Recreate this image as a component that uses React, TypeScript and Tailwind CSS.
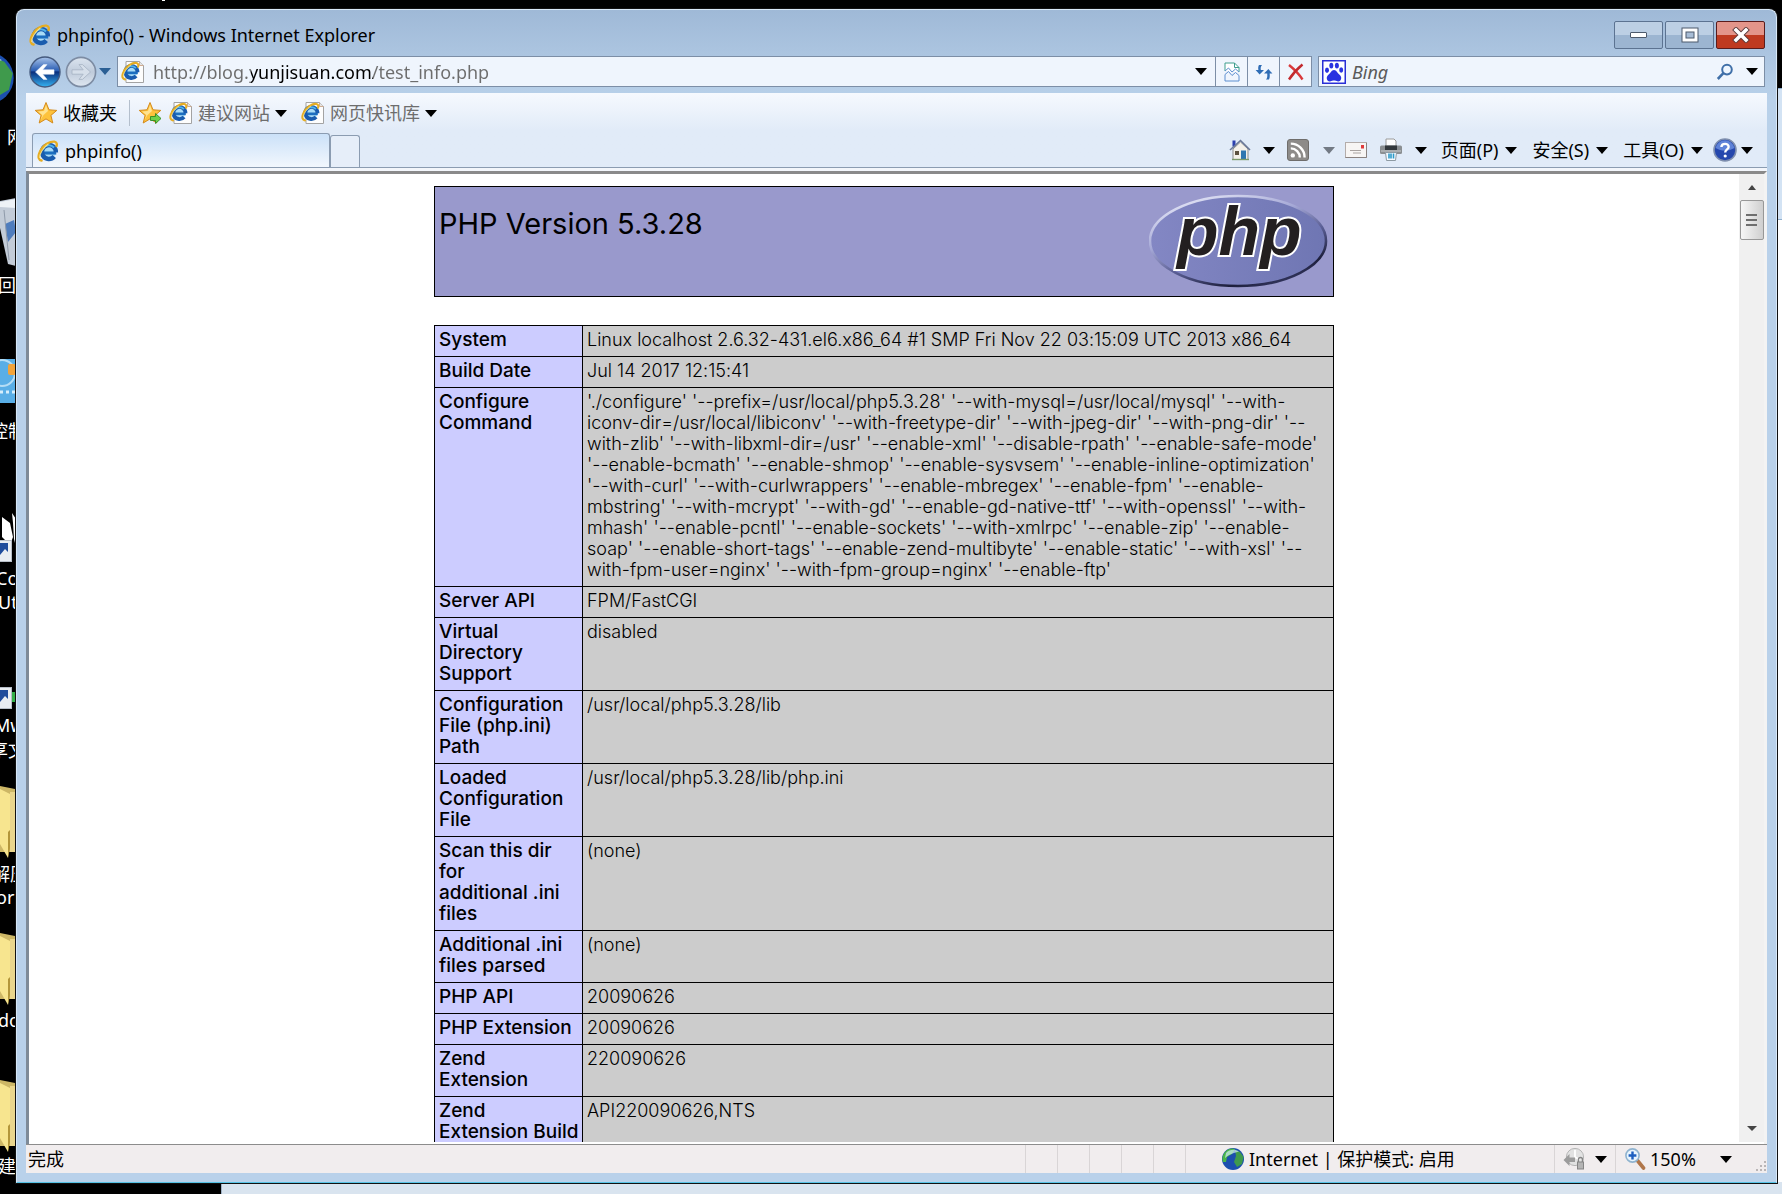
import type { ReactNode } from "react";

interface InfoRow {
  label: string;
  value: string;
}

const infoRows: InfoRow[] = [
  {
    label: "System",
    value: "Linux localhost 2.6.32-431.el6.x86_64 #1 SMP Fri Nov 22 03:15:09 UTC 2013 x86_64",
  },
  { label: "Build Date", value: "Jul 14 2017 12:15:41" },
  {
    label: "Configure\nCommand",
    value: [
      "'./configure' '--prefix=/usr/local/php5.3.28' '--with-mysql=/usr/local/mysql' '--with-",
      "iconv-dir=/usr/local/libiconv' '--with-freetype-dir' '--with-jpeg-dir' '--with-png-dir' '--",
      "with-zlib' '--with-libxml-dir=/usr' '--enable-xml' '--disable-rpath' '--enable-safe-mode'",
      "'--enable-bcmath' '--enable-shmop' '--enable-sysvsem' '--enable-inline-optimization'",
      "'--with-curl' '--with-curlwrappers' '--enable-mbregex' '--enable-fpm' '--enable-",
      "mbstring' '--with-mcrypt' '--with-gd' '--enable-gd-native-ttf' '--with-openssl' '--with-",
      "mhash' '--enable-pcntl' '--enable-sockets' '--with-xmlrpc' '--enable-zip' '--enable-",
      "soap' '--enable-short-tags' '--enable-zend-multibyte' '--enable-static' '--with-xsl' '--",
      "with-fpm-user=nginx' '--with-fpm-group=nginx' '--enable-ftp'",
    ].join("\n"),
  },
  { label: "Server API", value: "FPM/FastCGI" },
  { label: "Virtual\nDirectory\nSupport", value: "disabled" },
  { label: "Configuration\nFile (php.ini)\nPath", value: "/usr/local/php5.3.28/lib" },
  { label: "Loaded\nConfiguration\nFile", value: "/usr/local/php5.3.28/lib/php.ini" },
  { label: "Scan this dir\nfor\nadditional .ini\nfiles", value: "(none)" },
  { label: "Additional .ini\nfiles parsed", value: "(none)" },
  { label: "PHP API", value: "20090626" },
  { label: "PHP Extension", value: "20090626" },
  { label: "Zend\nExtension", value: "220090626" },
  { label: "Zend\nExtension Build", value: "API220090626,NTS" },
];

/* ---------- icons ---------- */

function IeMark() {
  return (
    <g fill="none">
      <circle cx="13" cy="13" r="7.6" fill="#a9dcf6" />
      <path d="M21 14.2H7" stroke="#1c6fc0" strokeWidth="3.4" />
      <path d="M20.6 13.4A7.6 7.6 0 1 0 18.8 18" stroke="#1a5cae" strokeWidth="4.8" />
      <path d="M18.6 8.2A7.6 7.6 0 0 0 6.4 9.6" stroke="#4fb2ea" strokeWidth="2.2" />
      <path
        d="M5 22.4C-1.6 21.4 2.6 9.6 10.8 4.2C17 0.4 22.8 0.8 21.4 6.6"
        stroke="#e6ad22"
        strokeWidth="2.6"
        strokeLinecap="round"
      />
      <path d="M3 19.6C2.4 15 7 8 12.4 4.4" stroke="#fbe48a" strokeWidth="1.1" />
    </g>
  );
}

function IeIcon() {
  return (
    <svg viewBox="0 0 24 24" className="size-[22px] shrink-0">
      <IeMark />
    </svg>
  );
}

function IePageIcon() {
  return (
    <svg viewBox="0 0 24 24" className="size-6 shrink-0">
      <path d="M5 1.5H18.5L22.5 5.5V22.5H5Z" fill="#fdfdfd" stroke="#a3a3a3" />
      <path d="M18.5 1.5V5.5H22.5" fill="#e4e4e4" stroke="#c79a7a" strokeWidth="0.8" />
      <g transform="translate(0 1.5) scale(0.8)">
        <IeMark />
      </g>
    </svg>
  );
}

function StarIcon({ withArrow = false }: { withArrow?: boolean }) {
  return (
    <svg viewBox="0 0 24 24" className="size-6 shrink-0">
      <path
        d="M12 1.5L15 8.8L22.8 9.4L16.9 14.4L18.8 22L12 17.9L5.2 22L7.1 14.4L1.2 9.4L9 8.8Z"
        fill="#fdc23c"
        stroke="#d48a1c"
        strokeLinejoin="round"
      />
      <path d="M12 4L14 10L9.5 14L6.5 19L8.4 14L4 10.4L10 10Z" fill="#ffe391" />
      {withArrow && (
        <path
          d="M12.5 15.5H17.5V12.5L23 17.5L17.5 22.5V19.5H12.5Z"
          fill="#6ed04a"
          stroke="#2f8a22"
          strokeWidth="0.9"
        />
      )}
    </svg>
  );
}

function BackIcon() {
  return (
    <svg viewBox="0 0 32 32" className="size-8">
      <defs>
        <linearGradient id="back" x1="0" y1="0" x2="0" y2="1">
          <stop offset="0" stopColor="#a9c4ea" />
          <stop offset="0.45" stopColor="#2c5fb4" />
          <stop offset="0.5" stopColor="#0a2e7c" />
          <stop offset="1" stopColor="#35b4f4" />
        </linearGradient>
      </defs>
      <circle cx="16" cy="16" r="15" fill="url(#back)" stroke="#44597d" strokeWidth="1.4" />
      <path
        d="M6.5 16L14.5 8.6H18L13.8 13.8H25V18.2H13.8L18 23.4H14.5Z"
        fill="#fff"
        stroke="#e6effb"
        strokeWidth="0.6"
      />
    </svg>
  );
}

function ForwardIcon() {
  return (
    <svg viewBox="0 0 32 32" className="size-8">
      <defs>
        <linearGradient id="fwd" x1="0" y1="0" x2="0" y2="1">
          <stop offset="0" stopColor="#dbe4ef" />
          <stop offset="0.5" stopColor="#bfcbdb" />
          <stop offset="1" stopColor="#dfe7f1" />
        </linearGradient>
      </defs>
      <circle cx="16" cy="16" r="14.6" fill="url(#fwd)" stroke="#7d8ca3" strokeWidth="1.6" />
      <path
        d="M25.5 16L17.5 8.6H14L18.2 13.8H7V18.2H18.2L14 23.4H17.5Z"
        fill="#d6dfea"
        stroke="#a5b1c2"
        strokeWidth="0.8"
      />
    </svg>
  );
}

function Caret({ className = "text-black" }: { className?: string }) {
  return (
    <svg viewBox="0 0 12 7" className={`h-[7px] w-3 shrink-0 ${className}`}>
      <path d="M0 0H12L6 7Z" fill="currentColor" />
    </svg>
  );
}

function BrokenPageIcon() {
  return (
    <svg viewBox="0 0 16 20" className="h-5 w-4" fill="none">
      <path d="M1 9V1H10.5L15 5.5V10" stroke="#3f9e8d" fill="#fff" />
      <path d="M10.5 1V5.5H15" stroke="#3f9e8d" />
      <path d="M1 9L4.5 6L8 10L11.5 7L15 10M1 12.5L4.5 9.5L8 13.5L11.5 10.5L15 13.5" stroke="#5d8fd0" />
      <path d="M1 12.5V19H15V13.5" stroke="#5d8fd0" />
    </svg>
  );
}

function RefreshIcon() {
  return (
    <svg viewBox="0 0 18 18" className="size-[18px]" fill="#2f6db5">
      <path d="M4 2H7C5.6 3.6 5.6 5 5.8 7H9L4.6 11.5L0.6 7H3.4C3 5 3.2 3.4 4 2Z" />
      <path d="M14 16.5H11C12.4 15 12.4 13 12.2 10.6H9L13.4 6L17.4 10.6H14.6C15 13 14.8 15 14 16.5Z" />
    </svg>
  );
}

function StopIcon() {
  return (
    <svg viewBox="0 0 18 18" className="size-[18px]" fill="none">
      <path d="M2 2C7 6 12 11 15.5 16.5" stroke="#d9393b" strokeWidth="2.4" />
      <path d="M15.5 1.5C10 6 5.5 11 2 16.5" stroke="#c22a2e" strokeWidth="2.4" />
    </svg>
  );
}

function BaiduIcon() {
  return (
    <svg viewBox="0 0 24 24" className="size-6 shrink-0">
      <rect x="0.75" y="0.75" width="22.5" height="22.5" fill="#fff" stroke="#2a2fd6" strokeWidth="1.5" />
      <g fill="#2932e1">
        <ellipse cx="9.3" cy="5.6" rx="2" ry="2.9" />
        <ellipse cx="14.9" cy="5.6" rx="2" ry="2.9" />
        <ellipse cx="5" cy="10.2" rx="2" ry="2.7" />
        <ellipse cx="19.2" cy="10" rx="2" ry="2.7" />
        <path d="M12 10C14.6 10 15.2 13 17.6 14.8C20.4 17 19.4 21.6 16 21.4C14 21.2 13.4 20.6 12 20.6C10.6 20.6 10 21.2 8 21.4C4.6 21.6 3.6 17 6.4 14.8C8.8 13 9.4 10 12 10Z" />
      </g>
    </svg>
  );
}

function SearchIcon() {
  return (
    <svg viewBox="0 0 18 18" className="size-[18px]" fill="none" stroke="#3f6fa8">
      <circle cx="11" cy="6.6" r="4.8" strokeWidth="2" fill="#eef6ff" />
      <path d="M7.4 10.2L1.8 16" strokeWidth="2.6" />
    </svg>
  );
}

function HomeIcon() {
  return (
    <svg viewBox="0 0 22 22" className="size-[22px]">
      <rect x="3.5" y="1.5" width="3" height="6" fill="#2a3fae" />
      <path d="M4 10L11.5 3L19 10V20.5H4Z" fill="#f4f1ea" stroke="#8d8d8d" />
      <path d="M1 11L11.5 1.5L21 11" fill="none" stroke="#6a7898" strokeWidth="1.6" />
      <rect x="6" y="12" width="4" height="4" fill="#5d513f" />
      <rect x="12" y="11.5" width="5" height="9" fill="#2f76b0" />
      <path d="M3 20.5H20" stroke="#7d9a6a" strokeWidth="1.4" />
    </svg>
  );
}

function RssIcon() {
  return (
    <svg viewBox="0 0 22 22" className="size-[22px]">
      <rect x="0.5" y="0.5" width="21" height="21" rx="2.5" fill="#8d8b89" stroke="#6f6d6b" />
      <circle cx="5.8" cy="16.4" r="2.2" fill="#fff" />
      <path d="M3.8 9.4A9 9 0 0 1 12.8 18.4M3.8 4.6A13.8 13.8 0 0 1 17.6 18.4" fill="none" stroke="#fff" strokeWidth="2.4" />
    </svg>
  );
}

function MailIcon() {
  return (
    <svg viewBox="0 0 22 16" className="h-4 w-[22px]">
      <rect x="0.5" y="0.5" width="21" height="15" fill="#f7f5f4" stroke="#b3acaa" />
      <path d="M0.5 15.5H21.5V1" fill="none" stroke="#8a8280" />
      <rect x="16" y="3" width="3" height="3.5" fill="#e03b3b" />
      <path d="M5 8.5H16M8 11H16" stroke="#a9a3a1" />
    </svg>
  );
}

function PrinterIcon() {
  return (
    <svg viewBox="0 0 24 24" className="size-6">
      <path d="M7 1H15L17 3V9H7Z" fill="#fff" stroke="#9a9a9a" />
      <rect x="1" y="7.5" width="22" height="8.5" rx="1.5" fill="#8b8f92" />
      <rect x="6" y="7.5" width="12" height="4.5" fill="#33383c" />
      <path d="M2 13H22" stroke="#c9ccce" />
      <path d="M6.5 14.5H17.5L16.5 22.5H7.5Z" fill="#f5fbff" stroke="#8d9aa3" />
      <path d="M10 15.5V20.5M12 15.5V20.5M14.5 15.5V20.5" stroke="#2c9ac8" strokeWidth="1.6" />
    </svg>
  );
}

function HelpIcon() {
  return (
    <svg viewBox="0 0 24 24" className="size-6">
      <circle cx="12" cy="12" r="11" fill="#2547ad" stroke="#7f8fae" strokeWidth="1.6" />
      <path d="M2.6 10A9.6 9.6 0 0 1 21.4 10C16 13.4 8 13.4 2.6 10Z" fill="#5f83d8" />
      <path d="M8.4 9C8.6 4.8 15.8 4.8 15.6 9C15.5 11.4 12.2 11.4 12.2 14.4" fill="none" stroke="#fff" strokeWidth="2.4" />
      <circle cx="12.2" cy="18" r="1.6" fill="#fff" />
    </svg>
  );
}

function GlobeIcon({ className = "size-6" }: { className?: string }) {
  return (
    <svg viewBox="0 0 24 24" className={`shrink-0 ${className}`}>
      <circle cx="12" cy="12" r="11" fill="#1c4fae" />
      <path d="M4 5C7 1 12 1 14 2L11 7L6 10L5 15L2 15C0.6 11 1.6 8 4 5Z" fill="#49b648" />
      <path d="M14 3L19 5L22.6 10L21 17L16 20L13 15L15 9Z" fill="#3f9a4c" />
      <path d="M5 6C8 2.4 14 1.6 18 4.4C14 5.6 8 7 4 11Z" fill="#d3ecf8" opacity="0.7" />
    </svg>
  );
}

function PrivacyIcon() {
  return (
    <svg viewBox="0 0 24 24" className="size-6">
      <circle cx="12" cy="10" r="8.6" fill="#e2e2e2" stroke="#b5b5b5" />
      <path d="M12 3V10L17 13" fill="none" stroke="#fff" strokeWidth="1.8" />
      <path d="M0.5 13L6.5 7V10.5H12V15H6.5V19Z" fill="#9c9c9c" />
      <rect x="14.5" y="15" width="6" height="7" fill="#b4b4b4" stroke="#858585" />
      <path d="M15.5 15V12.5A2 2 0 0 1 19.5 12.5V15" fill="none" stroke="#858585" strokeWidth="1.4" />
    </svg>
  );
}

function ZoomIcon() {
  return (
    <svg viewBox="0 0 22 22" className="size-[22px]">
      <path d="M13 12L19.5 20" stroke="#b0764a" strokeWidth="3.6" strokeLinecap="round" />
      <circle cx="8.5" cy="7.5" r="6.6" fill="#e8f4fd" stroke="#8fb3cf" strokeWidth="1.6" />
      <path d="M8.5 3.6V11.4M4.6 7.5H12.4" stroke="#1d5fc0" strokeWidth="2.4" />
    </svg>
  );
}

function PhpLogo() {
  return (
    <svg viewBox="0 0 180 96" className="h-24 w-[180px]">
      <defs>
        <linearGradient id="phpRim" x1="0.2" y1="0" x2="0.8" y2="1">
          <stop offset="0" stopColor="#e4e6f6" />
          <stop offset="0.35" stopColor="#a5a8d6" />
          <stop offset="0.6" stopColor="#5a5e94" />
          <stop offset="0.85" stopColor="#1d1f3c" />
          <stop offset="1" stopColor="#3c3f6c" />
        </linearGradient>
        <linearGradient id="phpFill" x1="0" y1="0" x2="1" y2="0">
          <stop offset="0" stopColor="#8387c4" />
          <stop offset="1" stopColor="#6f76b3" />
        </linearGradient>
      </defs>
      <ellipse cx="89" cy="47" rx="88" ry="45" fill="url(#phpFill)" stroke="url(#phpRim)" strokeWidth="2.6" />
      <text
        x="28"
        y="61"
        fontFamily="Liberation Sans"
        fontSize="68"
        fontWeight="700"
        fontStyle="italic"
        fill="#231f20"
        stroke="#fff"
        strokeWidth="4"
        paintOrder="stroke"
      >
        php
      </text>
    </svg>
  );
}

/* ---------- desktop behind the window ---------- */

function FolderArt() {
  return (
    <svg viewBox="0 0 16 72" className="h-[72px] w-4">
      <path d="M0 0L15 3V66H0Z" fill="#cdb766" />
      <path d="M10 6H16V66H10Z" fill="#e9d58c" />
      <path d="M0 3L10 8V46L8 72L0 58Z" fill="#f7e58f" />
      <path d="M8 46L10 44V62L8 72Z" fill="#b3963a" />
    </svg>
  );
}

function ShortcutArt() {
  return (
    <svg viewBox="0 0 16 22" className="h-[22px] w-4">
      <rect x="-1" y="0.5" width="12.5" height="21" fill="#e9edf2" stroke="#b7bec8" />
      <path d="M0 3H8V12L5 9L0 15Z" fill="#1f4c9c" />
    </svg>
  );
}

function DesktopLabel({ className, children }: { className: string; children: ReactNode }) {
  return (
    <span className={`absolute whitespace-nowrap text-lg leading-6 text-white ${className}`}>
      {children}
    </span>
  );
}

function Desktop() {
  return (
    <div className="absolute inset-0 overflow-hidden bg-black">
      <div className="absolute -left-10 top-[50px]">
        <GlobeIcon className="size-[56px]" />
      </div>
      <DesktopLabel className="left-[7px] top-[125px]">网</DesktopLabel>
      <svg viewBox="0 0 16 70" className="absolute left-0 top-[198px] h-[70px] w-4">
        <path d="M0 3L16 0V68L8 66L0 30Z" fill="#c3ccd8" />
        <path d="M0 4L16 1V10L0 9Z" fill="#eef2f6" />
        <path d="M5 26L14 22L16 34L8 44Z" fill="#4f7dbd" />
        <path d="M4 12L9 62" stroke="#8f9aaa" />
      </svg>
      <DesktopLabel className="-left-0.5 top-[273px]">回</DesktopLabel>
      <svg viewBox="0 0 16 50" className="absolute left-0 top-[359px] h-[50px] w-4">
        <rect width="16" height="44" fill="#59aee6" />
        <circle cx="2" cy="14" r="13" fill="none" stroke="#b5ddf5" strokeWidth="2" />
        <rect x="8" y="5" width="8" height="11" rx="2" fill="#f2a33a" />
        <path d="M0 33H16" stroke="#d7eefb" strokeWidth="3" strokeDasharray="3 3" />
      </svg>
      <DesktopLabel className="-left-2.5 top-[419px]">控制</DesktopLabel>
      <svg viewBox="0 0 16 36" className="absolute left-0 top-[513px] h-9 w-4">
        <path d="M2 4L10 10L13 24L10 32L2 24ZM12 0L16 6V34L14 26L13 10Z" fill="#fff" />
      </svg>
      <div className="absolute left-0 top-[540px]">
        <ShortcutArt />
      </div>
      <DesktopLabel className="-left-1 top-[566px]">Co</DesktopLabel>
      <DesktopLabel className="-left-0.5 top-[590px]">Ut</DesktopLabel>
      <div className="absolute left-0 top-[687px]">
        <ShortcutArt />
      </div>
      <span className="absolute left-3 top-[692px] h-2.5 w-1 bg-[#35b04a]" />
      <DesktopLabel className="-left-1.5 top-[713px]">Mw</DesktopLabel>
      <DesktopLabel className="-left-2.5 top-[738px]">享文</DesktopLabel>
      <div className="absolute left-0 top-[786px]">
        <FolderArt />
      </div>
      <DesktopLabel className="-left-2 top-[862px]">解压</DesktopLabel>
      <DesktopLabel className="-left-1 top-[885px]">orm</DesktopLabel>
      <div className="absolute left-0 top-[933px]">
        <FolderArt />
      </div>
      <DesktopLabel className="-left-0.5 top-[1008px]">do</DesktopLabel>
      <div className="absolute left-0 top-[1080px]">
        <FolderArt />
      </div>
      <DesktopLabel className="-left-0.5 top-[1154px]">建</DesktopLabel>
      <span className="absolute left-[162px] top-0 h-px w-[3px] bg-white" />
      {/* other windows peeking out */}
      <div className="absolute right-0 top-[88px] h-[132px] w-20 border-y border-[#8fb0cf] bg-[#d3e3f4]" />
      <div className="absolute bottom-0 right-0 top-[220px] w-20 bg-white" />
      <div className="absolute bottom-0 left-[221px] right-0 h-3 border-l border-[#9fb2c6] bg-[#d9e4ef]" />
    </div>
  );
}

/* ---------- browser chrome ---------- */

function TitleBar() {
  const button =
    "flex h-7 w-[49px] items-center justify-center rounded-[2px] border border-[#5c7391] bg-linear-to-b from-[#bccfe4] from-50% to-[#9cb5d1] to-50%";
  return (
    <header className="flex h-[46px] items-center pt-1 pl-[3px] pr-0.5">
      <IeIcon />
      <h1 className="ml-1.5 flex-1 text-lg">phpinfo() - Windows Internet Explorer</h1>
      <div className="flex gap-0.5">
        <button aria-label="最小化" className={button}>
          <span className="h-[6px] w-[17px] rounded-[1px] border border-[#4c5a6c] bg-white" />
        </button>
        <button aria-label="最大化" className={button}>
          <svg viewBox="0 0 18 16" className="h-4 w-[18px]">
            <rect x="1" y="1" width="16" height="14" fill="#fff" stroke="#4c5a6c" />
            <rect x="5" y="5" width="8" height="6" fill="#a8bdd6" stroke="#4c5a6c" />
          </svg>
        </button>
        <button
          aria-label="关闭"
          className="flex h-7 w-[49px] items-center justify-center rounded-[2px] border border-[#5a1c1c] bg-linear-to-b from-[#e3958a] from-50% to-[#bf3a20] to-50%"
        >
          <svg viewBox="0 0 18 16" className="h-4 w-[18px]">
            <path d="M4 3L14 13M14 3L4 13" stroke="#5c3a3a" strokeWidth="5.4" strokeLinecap="square" />
            <path d="M4 3L14 13M14 3L4 13" stroke="#fff" strokeWidth="3.6" strokeLinecap="square" />
          </svg>
        </button>
      </div>
    </header>
  );
}

function NavBar() {
  const iconButton = "flex h-full w-8 items-center justify-center border-l border-[#7c8ea6]";
  return (
    <div className="mb-1.5 flex h-[31px] items-center pl-[3px] pr-0.5">
      <button aria-label="后退">
        <BackIcon />
      </button>
      <button aria-label="前进" className="ml-1">
        <ForwardIcon />
      </button>
      <button aria-label="最近的网页" className="ml-0.5 mr-1.5">
        <Caret className="text-[#2b5f94]" />
      </button>
      <div className="flex h-full flex-1 items-center border border-[#7c8ea6] bg-[#eff5fd]">
        <span className="ml-[3px]">
          <IePageIcon />
        </span>
        {/* the domain part of the address is shown darker */}
        <input
          aria-label="地址"
          defaultValue="http://blog.yunjisuan.com/test_info.php"
          className="ml-2 h-full min-w-0 flex-1 bg-[linear-gradient(to_right,#6d6d6d_98px,#000_98px,#000_220px,#6d6d6d_220px)] bg-clip-text text-lg text-transparent outline-none"
        />
        <button aria-label="显示地址列表" className="mr-2">
          <Caret />
        </button>
        <button aria-label="兼容性视图" className={iconButton}>
          <BrokenPageIcon />
        </button>
        <button aria-label="刷新" className={iconButton}>
          <RefreshIcon />
        </button>
        <button aria-label="停止" className={iconButton}>
          <StopIcon />
        </button>
      </div>
      <div className="ml-1.5 flex h-full w-[447px] items-center border border-[#7c8ea6] bg-[#eff5fd] pl-[3px] pr-1.5">
        <BaiduIcon />
        <input
          aria-label="搜索"
          placeholder="Bing"
          className="ml-1.5 min-w-0 flex-1 bg-transparent text-lg italic outline-none placeholder:text-[#5a5a5a]"
        />
        <button aria-label="开始搜索">
          <SearchIcon />
        </button>
        <button aria-label="搜索选项" className="ml-3">
          <Caret />
        </button>
      </div>
    </div>
  );
}

function FavoritesBar() {
  return (
    <div className="flex h-10 items-center pl-2 text-lg">
      <button className="flex items-center gap-[5px]">
        <StarIcon />
        收藏夹
      </button>
      <span className="ml-3 mr-2 h-[26px] w-px bg-[#b4bfcd]" />
      <button aria-label="添加到收藏夹栏">
        <StarIcon withArrow />
      </button>
      <button className="ml-[7px] flex items-center gap-[5px] text-[#6d6d6d]">
        <IePageIcon />
        建议网站
        <Caret />
      </button>
      <button className="ml-3.5 flex items-center gap-[5px] text-[#6d6d6d]">
        <IePageIcon />
        网页快讯库
        <Caret />
      </button>
    </div>
  );
}

function CommandBar() {
  const menus = ["页面(P)", "安全(S)", "工具(O)"];
  return (
    <div className="ml-auto flex items-center pr-3.5 text-lg">
      <button aria-label="主页" className="flex items-center gap-3">
        <HomeIcon />
        <Caret />
      </button>
      <button aria-label="源" className="ml-3 flex items-center gap-3.5">
        <RssIcon />
        <Caret className="text-[#737a84]" />
      </button>
      <button aria-label="阅读邮件" className="ml-2.5">
        <MailIcon />
      </button>
      <button aria-label="打印" className="ml-3 flex items-center gap-3">
        <PrinterIcon />
        <Caret />
      </button>
      <div className="ml-3.5 flex gap-[15px]">
        {menus.map((menu) => (
          <button key={menu} className="flex items-center gap-[7px]">
            {menu}
            <Caret />
          </button>
        ))}
      </div>
      <button aria-label="帮助" className="ml-2.5 flex items-center gap-1">
        <HelpIcon />
        <Caret />
      </button>
    </div>
  );
}

function TabRow() {
  return (
    <div className="flex h-[35px] border-b border-[#8b9cb1] pl-1.5">
      <button className="flex w-[298px] items-center gap-1.5 rounded-t-[3px] border border-b-0 border-[#8b9cb1] bg-linear-to-b from-[#cbe1f8] to-[#f2f7fd] pl-1 text-lg">
        <IeIcon />
        phpinfo()
      </button>
      <button
        aria-label="新选项卡"
        className="mt-0.5 w-[30px] rounded-t-[3px] border border-b-0 border-[#8b9cb1] bg-[#e6eef9]"
      />
      <CommandBar />
    </div>
  );
}

/* ---------- page ---------- */

function PhpInfoPage() {
  return (
    <main className="min-w-0 flex-1 overflow-hidden bg-white pt-3 font-[Inter,sans-serif] [font-feature-settings:'calt'_0]">
      <div className="mx-auto flex h-[111px] w-[900px] justify-between border border-black bg-[#9999cc] px-1 pt-[7px]">
        <h2 className="mt-3 text-[29px] leading-9">PHP Version 5.3.28</h2>
        <PhpLogo />
      </div>
      <table className="mx-auto mt-7 w-[900px] table-fixed border-collapse text-lg leading-[21px] text-black">
        <tbody>
          {infoRows.map((row) => (
            <tr key={row.label} className="align-top">
              <th
                scope="row"
                className="w-[148px] whitespace-pre border border-black bg-[#ccccff] px-1 pt-[3px] pb-1.5 text-left text-[19px] leading-[21px] font-medium"
              >
                {row.label}
              </th>
              <td className="whitespace-pre border border-black bg-[#cccccc] px-1 pt-[3px] pb-1.5 font-light">
                {row.value}
              </td>
            </tr>
          ))}
        </tbody>
      </table>
    </main>
  );
}

function ScrollBar() {
  return (
    <div className="flex w-[25px] flex-col items-center bg-[#f0f0f0]">
      <button aria-label="向上滚动" className="flex h-[26px] items-center">
        <svg viewBox="0 0 8 5" className="h-[5px] w-2">
          <path d="M0 5H8L4 0Z" fill="#444" />
        </svg>
      </button>
      <div className="flex h-10 w-6 flex-col items-center justify-center gap-[3px] rounded-[2px] border border-[#979797] bg-linear-to-r from-[#f6f6f6] to-[#cfcfcf]">
        <span className="h-0.5 w-[11px] bg-[#6e6e6e]" />
        <span className="h-0.5 w-[11px] bg-[#6e6e6e]" />
        <span className="h-0.5 w-[11px] bg-[#6e6e6e]" />
      </div>
      <button aria-label="向下滚动" className="mt-auto flex h-7 items-center">
        <svg viewBox="0 0 10 5" className="h-[5px] w-2.5">
          <path d="M0 0H10L5 5Z" fill="#444" />
        </svg>
      </button>
    </div>
  );
}

function StatusBar() {
  return (
    <footer className="flex h-7 items-center bg-[#f1edee] text-lg">
      <span className="flex-1 pl-0.5">完成</span>
      {[0, 1, 2, 3, 4, 5].map((i) => (
        <span key={i} className="h-full w-8 border-l border-[#d9d5d6]" />
      ))}
      <div className="flex h-full w-[337px] items-center gap-1 pl-1">
        <GlobeIcon />
        Internet | 保护模式: 启用
      </div>
      <button aria-label="隐私" className="flex h-full w-[61px] items-center gap-2 border-l border-[#d9d5d6] pl-2">
        <PrivacyIcon />
        <Caret />
      </button>
      <button className="flex h-full w-[152px] items-center border-l border-[#d9d5d6] pl-2">
        <ZoomIcon />
        <span className="ml-1 mr-6">150%</span>
        <Caret />
        <svg viewBox="0 0 12 12" className="mt-auto ml-auto size-3" fill="#b9b5b6">
          <path d="M9 0h2v2H9zM5 4h2v2H5zM9 4h2v2H9zM1 8h2v2H1zM5 8h2v2H5zM9 8h2v2H9z" />
        </svg>
      </button>
    </footer>
  );
}

export default function App() {
  return (
    <div className="relative h-screen overflow-hidden pt-[9px] pr-[5px] pb-[11px] pl-4 font-['Noto_Sans','Noto_Sans_CJK_SC',sans-serif] text-black">
      <Desktop />
      <div className="relative flex h-full flex-col rounded-t-lg border border-b-[#56c3e6] border-[#d8e8f8] bg-linear-to-b from-[#9fb9d7] to-[#b9d1ea] to-[90px] px-[9px] pb-[9px] shadow-[0_0_0_1px_#111]">
        <TitleBar />
        <NavBar />
        <div className="flex min-h-0 flex-1 flex-col bg-[#f3f6fb]">
          <div className="bg-linear-to-b from-[#f6f9fe] to-[#e1ebf8] to-50%">
            <FavoritesBar />
            <TabRow />
          </div>
          <div className="mt-[3px] flex min-h-0 flex-1 border-t-[3px] border-r-[3px] border-l-[3px] border-t-[#8a8a8a] border-r-[#f3f3f3] border-l-[#7f8b98] bg-white pb-0.5">
            <PhpInfoPage />
            <ScrollBar />
          </div>
          <div className="border-t border-[#8c8c8c]">
            <StatusBar />
          </div>
        </div>
      </div>
    </div>
  );
}
